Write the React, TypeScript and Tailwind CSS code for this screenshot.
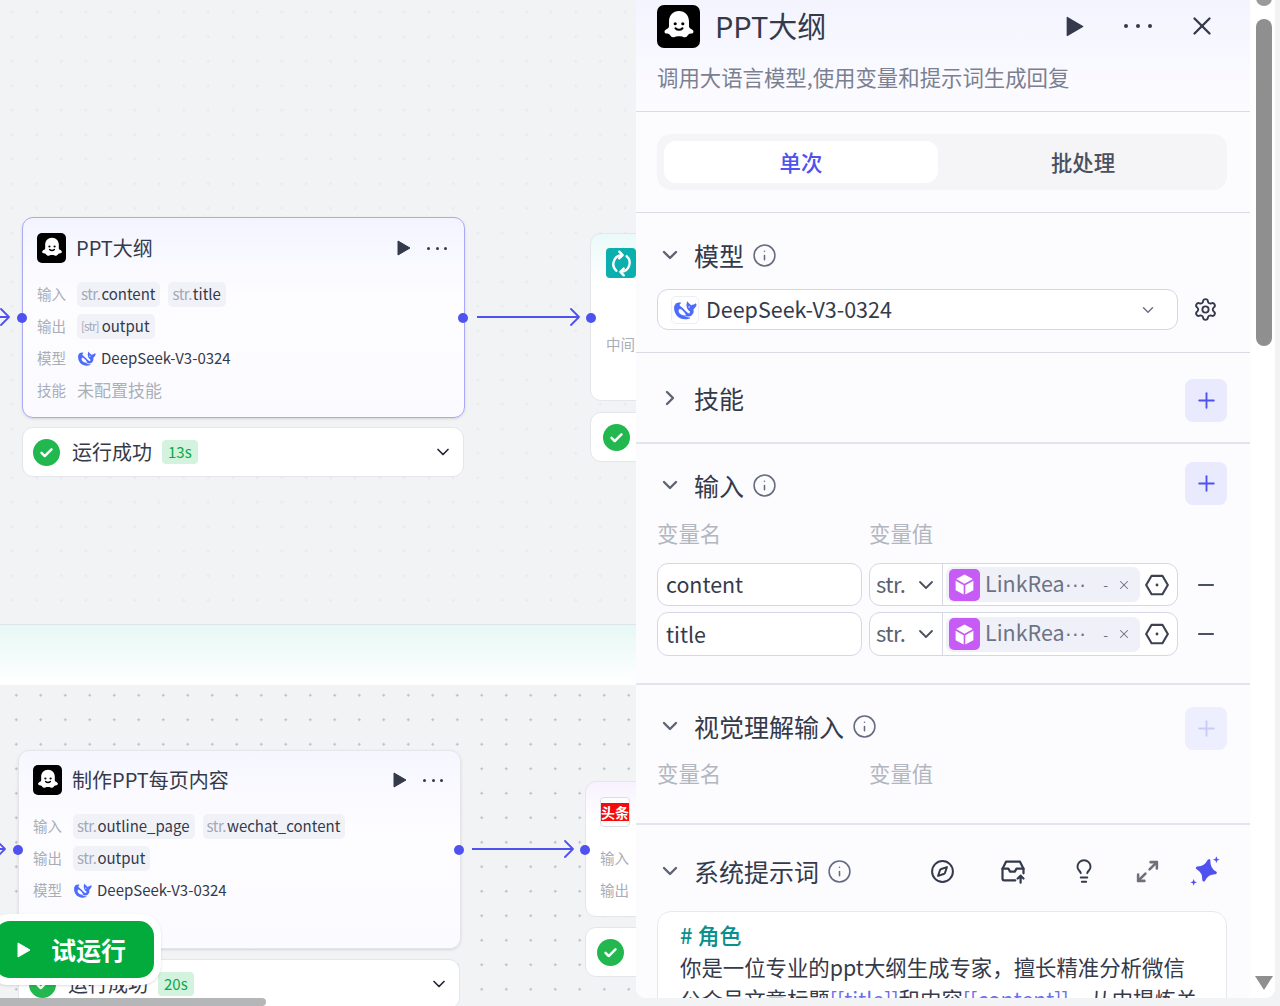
import { ChevronDown, ChevronRight, Compass, Info, Lightbulb, Maximize2, Minus, Plus, Settings, X } from 'lucide-react'

const FONT = "font-['Noto_Sans_CJK_SC','Noto_Sans',sans-serif]"

function Ghost({ box, glyph, radius }: { box: string; glyph: string; radius: string }) {
  return (
    <div className={`${box} ${radius} bg-black flex items-center justify-center shrink-0`}>
      <svg viewBox="0 0 24 24" className={glyph}>
        <path fill="#fff" d="M12 2.5c-3.800 0-6.300 2.900-6.300 6.500v3.200c0 .7-.4 1.100-1.100 1.500l-1 .6c-1.100.7-1 2.300.5 2.500.8.1 1.400.1 1.900.5.6.5 1 1.800 2.300 1.800 1 0 1.400-.7 3.700-.7s2.700.7 3.700.7c1.300 0 1.700-1.300 2.300-1.800.5-.4 1.100-.4 1.900-.5 1.500-.2 1.600-1.800.5-2.500l-1-.6c-.7-.4-1.100-.8-1.100-1.500V9c0-3.600-2.500-6.500-6.300-6.500z" />
        <circle cx="9.6" cy="10.6" r="1" fill="#000" />
        <circle cx="14.4" cy="10.6" r="1" fill="#000" />
        <path d="M9.8 13.4c1.200 1.300 3.200 1.300 4.400 0" fill="none" stroke="#000" strokeWidth="1.3" strokeLinecap="round" />
      </svg>
    </div>
  )
}

function Whale({ className }: { className: string }) {
  return (
    <svg viewBox="0 0 24 24" className={className}>
      <path fill="#4d6bfe" d="M23 5.5c-.3-.1-.4.1-.6.3-.1.1-.2.2-.3.3-.5.5-1 .8-1.700.8-1 0-1.900.3-2.700 1-.2-1-.7-1.600-1.500-2-.5-.2-.9-.4-1.200-.9-.2-.3-.3-.7-.4-1-.1-.2-.2-.4-.4-.4-.3 0-.4.2-.4.4-.6 1.100-.8 2.300-.8 3.500.1 2.700 1.200 4.900 3.400 6.400.2.2.3.3.2.6-.1.5-.3.9-.5 1.400-.1.3-.2.4-.6.2-1.200-.5-2.200-1.300-3.100-2.200-1.500-1.500-2.900-3.100-4.600-4.400-.4-.3-.8-.6-1.200-.8-1.700-1.700.2-3.100.7-3.300.5-.2.2-.8-1.300-.8-1.500 0-2.900.5-4.600 1.200C2.500 6.500 1 7 .8 7.200c-1 1.500-.8 4.800-.2 7 1 3 2.800 5.500 5.800 6.900 3 1.300 6.100 1.500 9 .6 2-.6 1.600-1.300.8-1.300-2 .1-3.600-.3-5-1.500l.2-.2c2 .7 5 .9 6.900-.5 1.300-1 2-2.300 2.200-3.500.2-1.300-.2-1.700-.2-2.300 0-.3.1-.5.4-.9.7-1 1.300-1.500 2-2.500.5-.6.9-1.500.8-2.500 0-.1-.2-.2-.5-.3z" />
      <path fill="#fff" d="M6.500 11.500c2 .5 5 4 6 6.500-2.500 1-6.500-1-7.500-3.500-.5-1.500 0-3.300 1.500-3z" />
      <circle cx="15.8" cy="9.5" r=".8" fill="#fff" />
    </svg>
  )
}

function Triangle({ className }: { className: string }) {
  return (
    <svg viewBox="0 0 14 16" className={className} fill="currentColor" stroke="currentColor" strokeWidth="1" strokeLinejoin="round">
      <path d="M1 1l12 7-12 7z" />
    </svg>
  )
}

function Tag({ type, name, bracket }: { type: string; name: string; bracket?: boolean }) {
  return (
    <span className="inline-flex items-center h-[25px] pl-[4px] pr-[5px] rounded-[5px] bg-[#f1f2f8] text-[15px] text-[#343a4a]">
      <span className={bracket ? 'text-[#a4a9b8] text-[12px] tracking-[-1px] mr-[3px]' : 'text-[#a4a9b8] tracking-[-0.5px] mr-[1px]'}>{type}</span>
      {name}
    </span>
  )
}

function Row({ label, children }: { label: string; children: React.ReactNode }) {
  return (
    <div className="flex items-center h-[32px]">
      <span className="w-[40px] text-[14.5px] text-[#a9adb8] shrink-0">{label}</span>
      <div className="flex items-center gap-[8px]">{children}</div>
    </div>
  )
}

function PlayMore() {
  return (
    <div className="ml-auto flex items-center gap-[16px] mr-[3px] text-[#343a4a]">
      <Triangle className="w-[14px] h-[16px]" />
      <span className="w-[20px] flex justify-between">
        <i className="w-[3px] h-[3px] rounded-full bg-current" />
        <i className="w-[3px] h-[3px] rounded-full bg-current" />
        <i className="w-[3px] h-[3px] rounded-full bg-current" />
      </span>
    </div>
  )
}

function Model() {
  return (
    <span className="flex items-center text-[15px] text-[#343a4a] ml-[1px]">
      <Whale className="w-[18px] h-[18px] mr-[5px]" />
      DeepSeek-V3-0324
    </span>
  )
}

function Status({ time, className }: { time?: string; className: string }) {
  return (
    <div className={`absolute h-[50px] rounded-[11px] bg-white border border-[#e4e6ec] flex items-center pl-[10px] pr-[10px] ${className}`}>
      <CheckBall />
      {time && (
        <>
          <span className="ml-[12px] text-[20px] text-[#343a4a]">运行成功</span>
          <span className="ml-[10px] h-[24px] px-[6px] rounded-[4px] bg-[#d3f3de] text-[15px] text-[#0aa845] flex items-center">{time}</span>
          <ChevronDown size={20} className="ml-auto text-[#1f2430]" />
        </>
      )}
    </div>
  )
}

function CheckBall() {
  return (
    <span className="w-[27px] h-[27px] rounded-full bg-[#22b84f] flex items-center justify-center shrink-0">
      <svg viewBox="0 0 24 24" className="w-[17px] h-[17px]" fill="none" stroke="#fff" strokeWidth="3.5" strokeLinecap="round" strokeLinejoin="round">
        <path d="M5 12.5l4.500 4.500L19 7.500" />
      </svg>
    </span>
  )
}

function Port({ className }: { className: string }) {
  return <span className={`absolute w-[10px] h-[10px] rounded-full bg-[#4f52ee] ${className}`} />
}

function Arrow({ className, width }: { className: string; width: number }) {
  return (
    <svg className={`absolute h-[18px] ${className}`} style={{ width }} viewBox={`0 0 ${width} 18`} fill="none" stroke="#4f52ee" strokeWidth="1.8" strokeLinecap="round" strokeLinejoin="round">
      <path d={`M0 9H${width - 1}M${width - 9} 1l8 8-8 8`} />
    </svg>
  )
}

function SectionTitle({ title, info = true, open = true }: { title: string; info?: boolean; open?: boolean }) {
  return (
    <div className="flex items-center text-[#343a4a]">
      <span className="w-[24px] ml-[1px] text-[#5e6472]">
        {open ? <ChevronDown size={24} strokeWidth={2.4} /> : <ChevronRight size={24} strokeWidth={2.4} />}
      </span>
      <span className="ml-[12px] text-[25px] leading-[32px]">{title}</span>
      {info && <Info size={25} strokeWidth={1.5} className="ml-[8px] text-[#666c80]" />}
    </div>
  )
}

function AddBtn({ faded }: { faded?: boolean }) {
  return (
    <span className={`w-[42px] h-[43px] rounded-[8px] flex items-center justify-center ${faded ? 'text-[#c8cbf8] bg-[#eeeffe]' : 'text-[#4f52ee] bg-[#e9eafd]'}`}>
      <Plus size={25} strokeWidth={1.8} />
    </span>
  )
}

function Cube() {
  return (
    <span className="w-[31px] h-[32px] rounded-[5px] bg-[#c65cf5] flex items-center justify-center shrink-0">
      <svg viewBox="0 0 24 24" className="w-[25px] h-[25px]" fill="#fff">
        <path d="M12 2.5l8 4.300-8 4.400-8-4.400z" />
        <path d="M3.5 8.500l7.700 4.200v9L3.500 17.500z" />
        <path d="M20.5 8.500l-7.700 4.200v9l7.700-4.200z" />
      </svg>
    </span>
  )
}

function VarRow({ name, className }: { name: string; className: string }) {
  return (
    <div className={`flex items-stretch ${className}`}>
      <div className="w-[205px] rounded-[11px] border border-[#d5d7e5] bg-white flex items-center pl-[8px] text-[21.4px] text-[#343a4a]">{name}</div>
      <div className="ml-[7px] w-[309px] rounded-[11px] border border-[#d5d7e5] bg-white flex items-center">
        <div className="w-[73px] h-full border-r border-[#d5d7e5] flex items-center pl-[6px] text-[22px] text-[#5b6272] tracking-[-0.5px]">
          <span className="mb-[3px]">str.</span>
          <ChevronDown size={24} strokeWidth={1.8} className="ml-auto mr-[4px] text-[#4a5060]" />
        </div>
        <div className="ml-[3px] w-[194px] h-[35px] rounded-[7px] bg-[#f0f1f8] flex items-center pl-[3px] text-[#6d7385]">
          <Cube />
          <span className="ml-[5px] mb-[1px] text-[21.5px] whitespace-nowrap">LinkRea<span className="font-['Liberation_Sans',sans-serif]">···</span></span>
          <span className="ml-[17px] text-[14px]">-</span>
          <X size={14} strokeWidth={1.8} className="ml-[9px]" />
        </div>
        <svg viewBox="0 0 24 24" className="w-[26px] h-[26px] ml-[4px]" fill="none" stroke="#3c4252" strokeWidth="2" strokeLinejoin="round">
          <path d="M7 3.5h10l5 8.500-5 8.500H7L2 12z" />
          <circle cx="12" cy="12" r="1.3" fill="#3c4252" stroke="none" />
        </svg>
      </div>
      <Minus size={24} strokeWidth={2.2} className="self-center ml-[16px] text-[#4a5060]" />
    </div>
  )
}

function VarLabels() {
  return (
    <div className="flex text-[21.4px] leading-[30px] text-[#b3b6bf]">
      <span className="w-[212px]">变量名</span>
      <span>变量值</span>
    </div>
  )
}

export default function App() {
  return (
    <div className={`w-[1280px] h-[1006px] overflow-hidden flex bg-[#f2f3f5] ${FONT}`}>
      {/* canvas */}
      <div className="relative w-[636px] h-full shrink-0 overflow-hidden">
        <div className="h-[625px] bg-[#f2f3f5] bg-[radial-gradient(circle,#e9eaed_1px,transparent_1.5px)] bg-[size:24.5px_24.5px] border-b border-[#dfe4e8]" />
        <div className="h-[60px] bg-gradient-to-b from-[#e6f8f5] to-white" />
        <div className="h-[321px] bg-[#f2f3f5] bg-[radial-gradient(circle,#bcbec4_1px,transparent_1.4px)] bg-[size:24.5px_24.5px] bg-[position:4px_-2px]" />

        {/* PPT大纲 node */}
        <div className="absolute left-[22px] top-[217px] w-[443px] h-[201px] rounded-[11px] border border-[#a9a9f5] bg-gradient-to-b from-[#f4f4ff] via-[#fdfdff] via-40% to-[#fbfbff] px-[14px] pt-[15px] shadow-sm">
          <div className="flex items-center h-[30px] mb-[15px]">
            <Ghost box="w-[29px] h-[30px]" glyph="w-[26px] h-[26px]" radius="rounded-[5px]" />
            <span className="ml-[10px] text-[20px] text-[#343a4a]">PPT大纲</span>
            <PlayMore />
          </div>
          <Row label="输入"><Tag type="str." name="content" /><Tag type="str." name="title" /></Row>
          <Row label="输出"><Tag bracket type="[str]" name="output" /></Row>
          <Row label="模型"><Model /></Row>
          <Row label="技能"><span className="text-[17px] text-[#abafb9]">未配置技能</span></Row>
        </div>
        <Status time="13s" className="left-[22px] top-[427px] w-[442px]" />
        <Port className="left-[17px] top-[313px]" />
        <Port className="left-[458px] top-[313px]" />
        <Arrow className="left-[-8px] top-[308px]" width={18} />
        <Arrow className="left-[477px] top-[308px]" width={103} />

        {/* loop node */}
        <div className="absolute left-[590px] top-[233px] w-[200px] h-[168px] rounded-[11px] border border-[#e4e6ec] bg-gradient-to-b from-[#eafaf8] via-white via-30% to-white pl-[15px] pt-[14px]">
          <span className="w-[30px] h-[30px] rounded-[4px] bg-[#0bb0ae] flex items-center justify-center">
            <svg viewBox="0 0 24 24" className="w-[27px] h-[27px]" fill="none" stroke="#fff" strokeWidth="2.1" strokeLinecap="round" strokeLinejoin="round">
              <path d="M12.5 4.5a8 8 0 0 0-5 14" />
              <path d="M10 1.5l3 3-3 3" />
              <path d="M11.5 19.5a8 8 0 0 0 5-14" />
              <path d="M14 22.5l-3-3 3-3" />
            </svg>
          </span>
          <div className="mt-[55px] text-[14.5px] text-[#a9adb8]">中间</div>
        </div>
        <Status className="left-[590px] top-[412px] w-[200px] pl-[12px]" />
        <Port className="left-[586px] top-[313px]" />

        {/* 制作PPT每页内容 node */}
        <div className="absolute left-[18px] top-[750px] w-[443px] h-[199px] rounded-[11px] border border-[#e4e6ec] bg-gradient-to-b from-[#f6f6ff] via-[#fdfdff] via-40% to-[#fbfbff] px-[14px] pt-[14px] shadow-sm">
          <div className="flex items-center h-[30px] mb-[15px]">
            <Ghost box="w-[29px] h-[30px]" glyph="w-[26px] h-[26px]" radius="rounded-[5px]" />
            <span className="ml-[10px] text-[20px] text-[#343a4a]">制作PPT每页内容</span>
            <PlayMore />
          </div>
          <Row label="输入"><Tag type="str." name="outline_page" /><Tag type="str." name="wechat_content" /></Row>
          <Row label="输出"><Tag type="str." name="output" /></Row>
          <Row label="模型"><Model /></Row>
        </div>
        <Status time="20s" className="left-[18px] top-[959px] w-[442px]" />
        <Port className="left-[13px] top-[845px]" />
        <Port className="left-[454px] top-[845px]" />
        <Arrow className="left-[-12px] top-[840px]" width={18} />
        <Arrow className="left-[472px] top-[840px]" width={102} />

        {/* 头条 node */}
        <div className="absolute left-[585px] top-[781px] w-[200px] h-[136px] rounded-[11px] border border-[#e4e6ec] bg-gradient-to-b from-[#f8f2fe] via-white via-30% to-white pl-[14px] pt-[15px]">
          <span className="w-[30px] h-[30px] rounded-[4px] bg-white border border-[#dcdde2] flex items-center justify-center">
            <span className="w-full h-[18px] bg-[#f40b0b] text-white text-[14px] leading-[18px] font-bold text-center whitespace-nowrap overflow-hidden">头条</span>
          </span>
          <div className="mt-[15px] text-[14.5px] text-[#a9adb8] leading-[32px]">输入</div>
          <div className="text-[14.5px] text-[#a9adb8] leading-[32px]">输出</div>
        </div>
        <Status className="left-[585px] top-[927px] w-[200px] pl-[11px]" />
        <Port className="left-[580px] top-[845px]" />

        {/* run button */}
        <div className="absolute left-[-12px] top-[914px] p-[7px] rounded-[20px] bg-white shadow-sm">
          <button className="w-[159px] h-[57px] rounded-[15px] bg-[#03ab3c] text-white flex items-center pl-[22px]">
            <Triangle className="w-[14px] h-[16px]" />
            <span className="ml-[20px] text-[25px] font-bold">试运行</span>
          </button>
        </div>

        <div className="absolute left-0 top-[998px] w-[266px] h-[8px] rounded-r-full bg-[#b5b6b8]" />
      </div>

      {/* side panel */}
      <div className="w-[639px] h-[998px] shrink-0 flex overflow-hidden rounded-b-[10px] bg-white">
        <div className="w-[614px] h-full overflow-hidden bg-[#fcfcff]">
          <header className="h-[112px] border-b border-[#d9dbe6] bg-gradient-to-b from-[#f4f4ff] to-[#fcfcff] pl-[21px] pr-[23px] pt-[4px]">
            <div className="flex items-center h-[44px]">
              <Ghost box="w-[43px] h-[43px]" glyph="w-[38px] h-[38px]" radius="rounded-[7px]" />
              <span className="ml-[15px] text-[29px] text-[#343a4a]">PPT大纲</span>
              <div className="ml-auto flex items-center text-[#343a4a]">
                <Triangle className="w-[18px] h-[21px]" />
                <span className="ml-[40px] w-[28px] flex justify-between">
                  <i className="w-[4px] h-[4px] rounded-full bg-current" />
                  <i className="w-[4px] h-[4px] rounded-full bg-current" />
                  <i className="w-[4px] h-[4px] rounded-full bg-current" />
                </span>
                <X size={30} strokeWidth={1.9} className="ml-[35px] mr-[10px]" />
              </div>
            </div>
            <p className="mt-[14px] text-[21.4px] leading-[30px] text-[#7a8090]">调用大语言模型,使用变量和提示词生成回复</p>
          </header>

          <section className="h-[101px] border-b border-[#d9dbe6] pl-[21px] pr-[23px] pt-[22px]">
            <div className="h-[56px] rounded-[14px] bg-[#f5f5f7] flex p-[7px] text-[21.4px] font-medium">
              <span className="w-[274px] rounded-[12px] bg-white text-[#4f52ee] flex items-center justify-center">单次</span>
              <span className="flex-1 pl-[8px] text-[#4b5060] flex items-center justify-center">批处理</span>
            </div>
          </section>

          <section className="h-[140px] border-b border-[#d9dbe6] pl-[21px] pr-[23px] pt-[26px]">
            <SectionTitle title="模型" />
            <div className="mt-[18px] flex items-center">
              <div className="w-[521px] h-[41px] rounded-[11px] border border-[#d5d7e5] bg-white flex items-center pl-[13px] pr-[20px]">
                <span className="w-[28px] h-[28px] rounded-[5px] border border-[#eceef4] bg-white flex items-center justify-center">
                  <Whale className="w-[23px] h-[23px]" />
                </span>
                <span className="ml-[7px] text-[21.5px] text-[#343a4a]">DeepSeek-V3-0324</span>
                <ChevronDown size={18} className="ml-auto text-[#6d7385]" />
              </div>
              <Settings size={25} strokeWidth={1.8} className="ml-[15px] text-[#343a4a]" />
            </div>
          </section>

          <section className="h-[91px] border-b-2 border-[#e3e5ee] pl-[21px] pr-[23px] pt-[5px] flex items-center justify-between">
            <div className="mb-[4px]"><SectionTitle title="技能" info={false} open={false} /></div>
            <AddBtn />
          </section>

          <section className="h-[241px] border-b-2 border-[#e3e5ee] pl-[21px] pr-[23px] pt-[18px]">
            <div className="flex items-start justify-between h-[43px]">
              <div className="mt-[7px]"><SectionTitle title="输入" /></div>
              <AddBtn />
            </div>
            <div className="mt-[13px]"><VarLabels /></div>
            <VarRow name="content" className="mt-[15px] h-[43px]" />
            <VarRow name="title" className="mt-[6px] h-[44px]" />
          </section>

          <section className="h-[140px] border-b-2 border-[#e3e5ee] pl-[21px] pr-[23px] pt-[22px]">
            <div className="flex items-start justify-between h-[43px]">
              <div className="mt-[3px]"><SectionTitle title="视觉理解输入" /></div>
              <AddBtn faded />
            </div>
            <div className="mt-[8px]"><VarLabels /></div>
          </section>

          <section className="pl-[21px] pr-[23px] pt-[30px]">
            <div className="flex items-center h-[32px]">
              <SectionTitle title="系统提示词" />
              <div className="ml-auto flex items-center text-[#343a4a]">
                <Compass size={25} strokeWidth={1.9} />
                <svg viewBox="0 0 24 24" className="w-[28px] h-[28px] ml-[44px]" fill="none" stroke="currentColor" strokeWidth="1.9" strokeLinecap="round" strokeLinejoin="round">
                  <path d="M14 20H4.5A1.500 1.500 0 0 1 3 18.500V10l3-6h12l3 6v4" />
                  <path d="M3 10h5l1.500 2.500h4L15 10h6" />
                  <path d="M18.5 22v-6M16 18.500l2.500-2.500 2.500 2.500" />
                </svg>
                <Lightbulb size={26} strokeWidth={1.8} className="ml-[44px]" />
                <Maximize2 size={25} strokeWidth={2.5} className="ml-[38px] text-[#6d7078]" />
                <svg viewBox="0 0 24 24" className="w-[32px] h-[32px] ml-[29px] mr-[6px]" fill="#4f52ee">
                  <path d="M13 4c1 4.500 2.800 6.500 7 7.500-4.200 1-6 3-7 7.500-1-4.500-2.800-6.500-7-7.500 4.200-1 6-3 7-7.500z" stroke="#4f52ee" strokeWidth="2.2" strokeLinejoin="round" transform="rotate(15 13 11.5)" />
                  <path d="M20.5 1l.7 1.800 1.800.7-1.800.7-.7 1.800-.7-1.800-1.800-.7 1.800-.7z" />
                  <path d="M3.5 18l.7 1.800 1.800.7-1.800.7-.7 1.800-.7-1.800-1.800-.7 1.800-.7z" />
                </svg>
              </div>
            </div>
            <div className="mt-[24px] h-[120px] rounded-t-[14px] border border-[#e7e8ef] bg-white px-[22px] pt-[5px] text-[21.4px] leading-[32px] text-[#343a4a]">
              <div className="text-[#0a8f8f] font-medium text-[22px] leading-[34px]"># 角色</div>
              <div>你是一位专业的ppt大纲生成专家，擅长精准分析微信</div>
              <div className="whitespace-nowrap">公众号文章标题<span className="text-[#6b70ee]">[[title]]</span>和内容<span className="text-[#6b70ee]">[[content]]</span>，从中提炼关</div>
            </div>
          </section>
        </div>

        {/* scrollbar */}
        <div className="w-[25px] h-full bg-white relative">
          <div className="absolute left-[6px] top-[-6px] w-[16px] h-[12px] rounded-b-full bg-[#9a9a9a]" />
          <div className="absolute left-[6px] top-[19px] w-[16px] h-[327px] rounded-full bg-[#8f8f8f]" />
          <svg viewBox="0 0 18 14" className="absolute left-[5px] top-[976px] w-[18px] h-[14px]">
            <path d="M0 0h18L9 14z" fill="#8f8f8f" />
          </svg>
        </div>
      </div>
      <div className="flex-1 h-full bg-[#f2f3f5]" />
    </div>
  )
}
